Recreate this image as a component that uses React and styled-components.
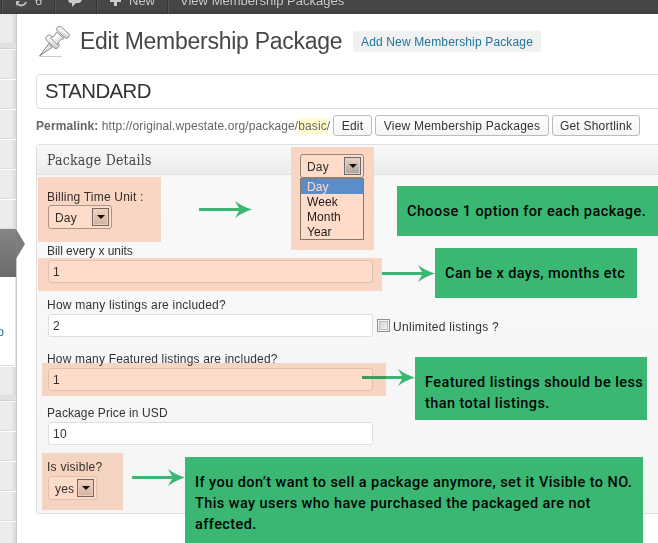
import React from "react";
import styled, { createGlobalStyle } from "styled-components";

const Global = createGlobalStyle`
  * { box-sizing: border-box; }
  body { margin: 0; background: #fff; }
`;

const Screen = styled.div`
  position: relative;
  width: 658px;
  height: 543px;
  overflow: hidden;
  background: #fff;
  color: #333;
  font: 12px/18px "Liberation Sans", Arial, sans-serif;
  white-space: nowrap;
`;

const AdminBar = styled.header`
  display: flex;
  height: 28px;
  margin-top: -14px;
  padding-left: 1px;
  background: linear-gradient(#464646 0 22px, #3d3d3d);
  color: #ccc;
  font-size: 13px;
  line-height: 29px;
  text-shadow: 0 -1px 0 #333;
`;

const BarItem = styled.div`
  display: flex;
  align-items: center;
  gap: ${(p) => p.$gap || 0}px;
  flex: none;
  width: ${(p) => p.$w}px;
  height: 28px;
  padding-left: ${(p) => p.$pad}px;
  border-left: 1px solid #333;
  box-shadow: inset 1px 0 0 #555;
  letter-spacing: ${(p) => p.$ls || 0}px;
`;

const Columns = styled.div`
  display: flex;
  height: 529px;
`;

const Menu = styled.nav`
  flex: none;
  width: 17px;
  background: #ececec;
  border-right: 1px solid #ccc;
  box-shadow: inset -5px 0 5px -4px rgba(0, 0, 0, 0.14);
`;

const MenuItem = styled.div`
  height: 30px;
  border-top: 1px solid ${(p) => (p.$first ? "transparent" : "#fbfbfb")};
  border-bottom: 1px solid #dedede;
`;

const MenuSeparator = styled.div`
  height: 5px;
  background: #e1e1e1;
  border-bottom: 1px solid #cfcfcf;
`;

const ActiveItem = styled.div`
  position: relative;
  height: 48px;
  background: linear-gradient(#858585, #6b6b6b);
  svg { position: absolute; left: 16px; top: 0; }
`;

const SubMenu = styled.div`
  height: 89px;
  padding-top: 46px;
  background: #fff;
  border-bottom: 1px solid #dedede;
  border-right: 1px solid #e4e4e4;
  color: #21759b;
  direction: rtl;
  overflow: hidden;
  span { display: block; width: 4px; height: 18px; margin-right: 11px; overflow: hidden; }
`;

const Main = styled.main`
  flex: 1;
  min-width: 0;
  padding: 12px 0 0 19px;
`;

const HeadingRow = styled.div`
  display: flex;
  align-items: flex-start;
  height: 48px;
`;

const PinIcon = styled.svg`
  flex: none;
  width: 34px;
  height: 33px;
  margin-right: 10px;
`;

const Heading = styled.h1`
  margin: 0;
  width: 273px;
  font-size: 23px;
  font-weight: 400;
  line-height: 30px;
  letter-spacing: -0.27px;
  color: #464646;
`;

const AddNew = styled.a`
  height: 21px;
  margin-top: 5px;
  width: 188px;
  padding-left: 8px;
  border-radius: 3px;
  background: #f1f1f1;
  color: #21759b;
  line-height: 22px;
  letter-spacing: 0.15px;
`;

const TitleField = styled.div`
  height: 35px;
  width: 640px;
  padding-left: 8px;
  border: 1px solid #dfdfdf;
  border-radius: 3px;
  font-size: 20.4px;
  line-height: 33px;
  letter-spacing: -0.6px;
  color: #333;
`;

const PermalinkRow = styled.div`
  display: flex;
  height: 22px;
  margin-top: 6px;
  color: #666;
  line-height: 22px;
`;

const Link = styled.div`
  width: 297px;
  letter-spacing: 0.1px;
  mark { background: #fffbcc; color: inherit; padding: 1px 0; }
`;

const Button = styled.button`
  width: ${(p) => p.$w}px;
  height: 21px;
  margin-right: 3px;
  padding: 1px 0 0;
  flex: none;
  border: 1px solid #bbb;
  border-radius: 3px;
  background: linear-gradient(#fefefe, #f4f4f4);
  color: #333;
  font: 12px/18px "Liberation Sans", Arial, sans-serif;
  letter-spacing: 0.22px;
`;

const Panel = styled.section`
  width: 640px;
  height: 370px;
  margin-top: 7px;
  border: 1px solid #dfdfdf;
  border-radius: 3px;
  background: linear-gradient(#f9f9f9, #f5f5f5);
`;

const PanelTitle = styled.h3`
  height: 30px;
  margin: 0;
  padding-left: 10px;
  border-bottom: 1px solid #dfdfdf;
  background: linear-gradient(#f9f9f9, #ececec);
  color: #464646;
  font: 400 14px/30px "DejaVu Serif Condensed", "DejaVu Serif", serif;
  font-stretch: condensed;
  letter-spacing: 0.2px;
`;

const Form = styled.div`
  padding: 13px 0 0 10px;
`;

const Field = styled.div`
  height: 54px;
`;

const Label = styled.label`
  display: block;
  height: ${(p) => p.$h || 18}px;
  line-height: 18px;
  letter-spacing: ${(p) => p.$ls ?? 0.3}px;
`;

const InputRow = styled.div`
  display: flex;
  align-items: center;
  padding-left: 1px;
  letter-spacing: 0.3px;
`;

const Input = styled.div`
  width: 325px;
  height: 23px;
  padding-left: 4px;
  border: 1px solid #dfdfdf;
  border-radius: 3px;
  background: #fff;
  line-height: 22px;
`;

const CheckBox = styled.span`
  width: 13px;
  height: 13px;
  margin: 0 3px 0 4px;
  border: 1px solid #8e8f8f;
  background: linear-gradient(135deg, #cbcfd5, #f6f6f6);
  box-shadow: inset 0 0 0 1px #f4f4f4, inset 0 0 0 2px #b8bcc0;
`;

const CheckLabel = styled.span`
  padding-top: 2px;
`;

const SelectBox = styled.div`
  display: flex;
  align-items: center;
  justify-content: space-between;
  width: ${(p) => p.$w}px;
  height: 24px;
  padding: 0 2px 0 6px;
  border: 1px solid ${(p) => p.$line || "#dfdfdf"};
  border-radius: 3px;
  background: #fff;
  line-height: 20px;
  letter-spacing: 0.15px;
  > span:first-child { padding-top: 1px; }
`;

const DropButton = styled.span`
  display: flex;
  align-items: center;
  justify-content: center;
  width: 17px;
  height: 18px;
  border: 1px solid ${(p) => (p.$open ? "#5e7e96" : "#777")};
  background: ${(p) => (p.$open ? "linear-gradient(#eef4f5, #a9bcc4)" : "linear-gradient(#f3f3f3, #cfcfcf)")};
  box-shadow: inset 0 0 0 1px #eee;
`;

const OptionList = styled.div`
  width: 64px;
  height: 62px;
  border: 1px solid #8a8a8a;
  background: #fff;
`;

const Option = styled.div`
  height: 15px;
  padding-left: 6px;
  line-height: 17px;
  letter-spacing: 0.1px;
  color: ${(p) => (p.$on ? "#fff" : "#222")};
  background: ${(p) => (p.$on ? "#5ba4ff" : "transparent")};
`;

const OpenMenu = styled.div`
  position: absolute;
  left: 291px;
  top: 147px;
  width: 83px;
  height: 103px;
  padding: 7px 0 0 9px;
  background: #f8f8f8;
`;

const Highlight = styled.div`
  position: absolute;
  left: ${(p) => p.$x}px;
  top: ${(p) => p.$y}px;
  width: ${(p) => p.$w}px;
  height: ${(p) => p.$h}px;
  background: #ffdcc9;
  mix-blend-mode: multiply;
`;

const ArrowSvg = styled.svg`
  position: absolute;
  left: ${(p) => p.$x}px;
  top: ${(p) => p.$y}px;
`;

const Callout = styled.div`
  position: absolute;
  left: ${(p) => p.$x}px;
  top: ${(p) => p.$y}px;
  width: ${(p) => p.$w}px;
  height: ${(p) => p.$h}px;
  padding: 15px 0 0 10px;
  background: #39b773;
  color: #020604;
  font: 500 14.5px/21px Roboto, sans-serif;
  letter-spacing: 0.42px;
`;

const Arrow = ({ x, y }) => (
  <ArrowSvg $x={x} $y={y} width="53" height="17" viewBox="0 0 53 17">
    <path d="M0 7H40L36 0Q44 6 53 8.5Q44 11 36 17L40 10H0Z" fill="#39b773" />
  </ArrowSvg>
);

const Select = ({ width, value, open, line }) => (
  <SelectBox $w={width} $line={line}>
    <span>{value}</span>
    <DropButton $open={open}>
      <svg width="8" height="4"><path d="M0 0h8L4 4z" fill="#111" /></svg>
    </DropButton>
  </SelectBox>
);

const TextField = ({ label, value, ls, children }) => (
  <Field>
    <Label $ls={ls}>{label}</Label>
    <InputRow><Input>{value}</Input>{children}</InputRow>
  </Field>
);

export default function App() {
  return (
    <Screen>
      <Global />
      <AdminBar>
        <BarItem $w={53} $pad={11} $gap={6}>
          <svg width="16" height="16" viewBox="0 0 16 16" fill="none" stroke="#bbb" strokeWidth="2">
            <path d="M3 6a5 5 0 0 1 9-1M13 10a5 5 0 0 1-9 1" />
            <path d="M13 2v5H9zM3 14V9h4z" fill="#bbb" stroke="none" />
          </svg>
          6
        </BarItem>
        <BarItem $w={42} $pad={12}>
          <svg width="16" height="16" viewBox="0 0 16 16">
            <path d="M4 2h8q3 0 3 4t-3 5H9l-4 4v-4H4Q1 11 1 6t3-4z" fill="#ccc" />
          </svg>
        </BarItem>
        <BarItem $w={71} $pad={13} $gap={8}>
          <svg width="11" height="12"><path d="M4 1h3v4h4v3H7v4H4V8H0V5h4z" fill="#ccc" /></svg>
          New
        </BarItem>
        <BarItem $w={491} $pad={12} $ls={0.02}>View Membership Packages</BarItem>
      </AdminBar>

      <Columns>
        <Menu>
          <MenuItem $first />
          <MenuSeparator />
          {[0, 1, 2, 3, 4, 5].map((n) => <MenuItem key={n} />)}
          <ActiveItem>
            <svg width="10" height="30"><path d="M0 0L9 15L0 30z" fill="#7d7d7d" /></svg>
          </ActiveItem>
          <SubMenu><span>o</span></SubMenu>
          <MenuItem />
          <MenuSeparator />
          {[0, 1, 2, 3, 4].map((n) => <MenuItem key={n} />)}
        </Menu>

        <Main>
          <HeadingRow>
            <PinIcon viewBox="0 0 34 33">
              <defs>
                <linearGradient id="metal" x1="0" y1="0" x2="1" y2="1">
                  <stop offset="0" stopColor="#fff" />
                  <stop offset="0.5" stopColor="#eee" />
                  <stop offset="1" stopColor="#bdbdbd" />
                </linearGradient>
              </defs>
              <path d="M4 30.500H26" stroke="#ccc" />
              <path d="M13 17.500L3.500 30L16.500 21z" fill="#e4e4e4" stroke="#777" strokeWidth="0.9" strokeLinejoin="round" />
              <g fill="url(#metal)" stroke="#8a8a8a" strokeWidth="0.9">
                <rect x="8.500" y="12.500" width="16" height="6.500" rx="3" transform="rotate(45 16.500 15.750)" />
                <path d="M14.500 12Q19 11 20.500 6L28 12.500Q22.500 14 21.500 19z" />
                <rect x="19.500" y="3.500" width="15" height="5.500" rx="2.500" transform="rotate(42 27 6.250)" />
              </g>
              <path d="M17.500 13.500L22.500 9" stroke="#fff" strokeWidth="2" />
            </PinIcon>
            <Heading>Edit Membership Package</Heading>
            <AddNew>Add New Membership Package</AddNew>
          </HeadingRow>
          <TitleField>STANDARD</TitleField>
          <PermalinkRow>
            <Link><b>Permalink:</b> http://original.wpestate.org/package/<mark>basic</mark>/</Link>
            <Button $w={39}>Edit</Button>
            <Button $w={174}>View Membership Packages</Button>
            <Button $w={88}>Get Shortlink</Button>
          </PermalinkRow>

          <Panel>
            <PanelTitle>Package Details</PanelTitle>
            <Form>
              <Field>
                <Label $h={17} $ls={0.2}>Billing Time Unit :</Label>
                <InputRow><Select width={64} value="Day" line="#aaa" /></InputRow>
              </Field>
              <TextField label="Bill every x units" value="1" ls={-0.05} />
              <TextField label="How many listings are included?" value="2" ls={0.22}>
                <CheckBox /><CheckLabel>Unlimited listings ?</CheckLabel>
              </TextField>
              <TextField label="How many Featured listings are included?" value="1" ls={0.18} />
              <TextField label="Package Price in USD" value="10" ls={0.1} />
              <Field>
                <Label $ls={0.25}>Is visible?</Label>
                <InputRow><Select width={49} value="yes" /></InputRow>
              </Field>
            </Form>
          </Panel>
        </Main>
      </Columns>

      <OpenMenu>
        <Select width={64} value="Day" open line="#999" />
        <OptionList>
          <Option $on>Day</Option>
          <Option>Week</Option>
          <Option>Month</Option>
          <Option>Year</Option>
        </OptionList>
      </OpenMenu>

      <Arrow x={199} y={201} />
      <Arrow x={382} y={265} />
      <Arrow x={362} y={369} />
      <Arrow x={132} y={469} />

      <Highlight $x={38} $y={177} $w={123} $h={65} />
      <Highlight $x={291} $y={147} $w={83} $h={103} />
      <Highlight $x={38} $y={258} $w={344} $h={33} />
      <Highlight $x={42} $y={363} $w={344} $h={33} />
      <Highlight $x={42} $y={453} $w={81} $h={57} />

      <Callout $x={397} $y={186} $w={261} $h={50}>Choose 1 option for each package.</Callout>
      <Callout $x={435} $y={248} $w={202} $h={50}>Can be x days, months etc</Callout>
      <Callout $x={415} $y={357} $w={232} $h={63}>
        <div>Featured listings should be less</div>
        <div>than total listings.</div>
      </Callout>
      <Callout $x={185} $y={457} $w={458} $h={86}>
        <div>If you don’t want to sell a package anymore, set it Visible to NO.</div>
        <div>This way users who have purchased the packaged are not</div>
        <div>affected.</div>
      </Callout>
    </Screen>
  );
}
